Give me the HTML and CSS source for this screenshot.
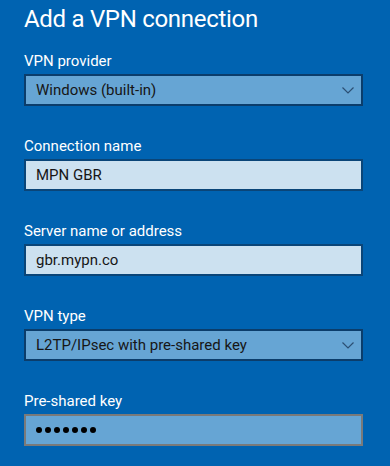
FILE: index.html
```html
<!DOCTYPE html>
<html lang="en">

<head>
  <meta charset="UTF-8" />
  <meta name="viewport" content="width=device-width, initial-scale=1" />
  <title>Add a VPN connection</title>
  <link rel="stylesheet" href="styles.css">
</head>

<body>
  <div id="main">
    <h1 class="title">Add a VPN connection</h1>

    <div class="fields">
      <div class="field">
        <div class="label">VPN provider</div>
        <div class="box combo">
          <span>Windows (built-in)</span>
          <svg class="chevron" width="12" height="7" viewBox="0 0 12 7"><path d="M0.5 0.5 L6 6 L11.5 0.5" fill="none" stroke="#2c4f73" stroke-width="1.2"/></svg>
        </div>
      </div>

      <div class="field">
        <div class="label">Connection name</div>
        <div class="box text">MPN GBR</div>
      </div>

      <div class="field">
        <div class="label">Server name or address</div>
        <div class="box text">gbr.mypn.co</div>
      </div>

      <div class="field">
        <div class="label">VPN type</div>
        <div class="box combo">
          <span>L2TP/IPsec with pre-shared key</span>
          <svg class="chevron" width="12" height="7" viewBox="0 0 12 7"><path d="M0.5 0.5 L6 6 L11.5 0.5" fill="none" stroke="#2c4f73" stroke-width="1.2"/></svg>
        </div>
      </div>

      <div class="field">
        <div class="label">Pre-shared key</div>
        <div class="box secret">
          <span class="dot"></span><span class="dot"></span><span class="dot"></span><span class="dot"></span><span class="dot"></span><span class="dot"></span><span class="dot"></span>
        </div>
      </div>
    </div>
  </div>
</body>

</html>
```

FILE: styles.css
```css
body {
  font-family: Roboto, 'Noto Sans', sans-serif;
  background-color: #0063b1;
  color: white;
  margin: 0;
  padding: 0;
}

#main {
  padding: 0 27px 0 24px;
}

.title {
  font-size: 24px;
  font-weight: 400;
  letter-spacing: -0.3px;
  line-height: 32px;
  margin: 3px 0 16px;
}

.fields {
  display: flex;
  flex-direction: column;
  gap: 30px;
}

.field {
  display: flex;
  flex-direction: column;
  gap: 3px;
}

.label {
  font-size: 15px;
  line-height: 20px;
}

.box {
  box-sizing: border-box;
  height: 32px;
  border: 2px solid;
  padding: 0 10px;
  display: flex;
  align-items: center;
  font-size: 15px;
  color: #161616;
}

.combo {
  background-color: #66a5d4;
  border-color: #0b3d6b;
  justify-content: space-between;
  padding-right: 7px;
}

.text {
  background-color: #cce1f0;
  border-color: #0a4578;
}

.secret {
  background-color: #66a5d4;
  border-color: #7a7a7a;
  gap: 3px;
}

.dot {
  width: 6px;
  height: 6px;
  border-radius: 50%;
  background: #000;
}
```
